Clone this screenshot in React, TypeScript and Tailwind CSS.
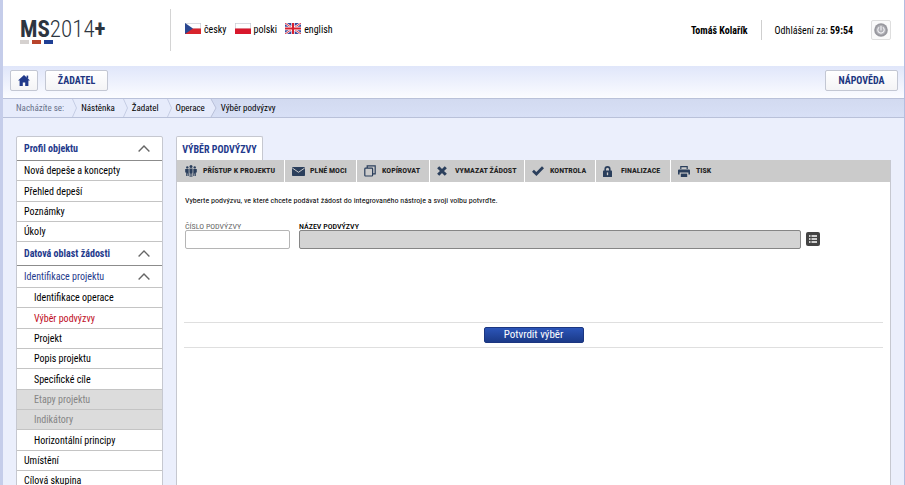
import React from 'react';
import clsx from 'clsx';

interface MenuItem {
    label: string;
    kind?: 'section' | 'group';
    child?: boolean;
    active?: boolean;
    disabled?: boolean;
}

const menu: MenuItem[] = [
    { label: 'Profil objektu', kind: 'section' },
    { label: 'Nová depeše a koncepty' },
    { label: 'Přehled depeší' },
    { label: 'Poznámky' },
    { label: 'Úkoly' },
    { label: 'Datová oblast žádosti', kind: 'section' },
    { label: 'Identifikace projektu', kind: 'group' },
    { label: 'Identifikace operace', child: true },
    { label: 'Výběr podvýzvy', child: true, active: true },
    { label: 'Projekt', child: true },
    { label: 'Popis projektu', child: true },
    { label: 'Specifické cíle', child: true },
    { label: 'Etapy projektu', child: true, disabled: true },
    { label: 'Indikátory', child: true, disabled: true },
    { label: 'Horizontální principy', child: true },
    { label: 'Umístění' },
    { label: 'Cílová skupina' },
];

const FlagCz = () => (
    <svg viewBox="0 0 16 11" className="h-[11px] w-4">
        <rect width="16" height="11" fill="#c9ccd4" />
        <rect x="0.7" y="0.7" width="14.6" height="4.8" fill="#fff" />
        <rect y="5.5" width="16" height="5.5" fill="#d8242c" />
        <path d="M0 0 8 5.5 0 11Z" fill="#2a4791" />
    </svg>
);

const FlagPl = () => (
    <svg viewBox="0 0 16 11" className="h-[11px] w-4">
        <rect width="16" height="11" fill="#c9ccd4" />
        <rect x="0.7" y="0.7" width="14.6" height="4.8" fill="#fff" />
        <rect y="5.5" width="16" height="5.5" fill="#d8182c" />
    </svg>
);

const FlagGb = () => (
    <svg viewBox="0 0 16 11" className="h-[11px] w-4">
        <rect width="16" height="11" fill="#3b4a9c" />
        <path d="M0 0 16 11M16 0 0 11" stroke="#fff" strokeWidth="2.2" />
        <path d="M0 0 16 11M16 0 0 11" stroke="#dc3545" strokeWidth="1" />
        <path d="M8 0V11M0 5.5H16" stroke="#fff" strokeWidth="3.4" />
        <path d="M8 0V11M0 5.5H16" stroke="#d8202f" strokeWidth="2" />
    </svg>
);

const Chevron = () => (
    <svg viewBox="0 0 12 7" className="h-[7px] w-3" fill="none" stroke="#666" strokeWidth="1.4">
        <path d="M0.6 6.4 6 1 11.4 6.4" />
    </svg>
);

const PeopleIcon = () => (
    <svg viewBox="0 0 12 12" className="size-3" fill="#2b3f5c">
        <circle cx="6" cy="1.5" r="1.5" />
        <circle cx="2.3" cy="2.4" r="1.2" />
        <circle cx="9.7" cy="2.4" r="1.2" />
        <path d="M4.4 3.5h3.2v4.2H7.3V12H6.4V8.5H5.6V12H4.7V7.7H4.4Z" />
        <path d="M0.2 4h3.5v4.2V11H2.8V8.5H2.3V11H1.2V7.5H.2Z" />
        <path d="M11.8 4H8.3v4.2V11h.9V8.5h.5V11h1.1V7.5h1Z" />
    </svg>
);

const MailIcon = () => (
    <svg viewBox="0 0 13 9" className="h-[9px] w-[13px]">
        <rect width="13" height="9" rx="0.8" fill="#2b3f5c" />
        <path d="M0.3 1 6.5 5.3 12.7 1" fill="none" stroke="#cbcbcb" strokeWidth="1" />
    </svg>
);

const CopyIcon = () => (
    <svg viewBox="0 0 12 12" className="size-3" fill="none" stroke="#2b3f5c" strokeWidth="1.2">
        <rect x="0.8" y="3.2" width="7.8" height="7.8" rx="0.8" />
        <path d="M3.2 3V0.8H11.2V8.8H8.8" />
    </svg>
);

const CrossIcon = () => (
    <svg viewBox="0 0 10 10" className="size-[10px]" stroke="#2b3f5c" strokeWidth="3">
        <path d="M1.2 1.2 8.8 8.8M8.8 1.2 1.2 8.8" />
    </svg>
);

const CheckIcon = () => (
    <svg viewBox="0 0 12 10" className="h-[10px] w-3" fill="none" stroke="#2b3f5c" strokeWidth="2.8">
        <path d="M1 4.8 4.4 8 11 1.2" />
    </svg>
);

const LockIcon = () => (
    <svg viewBox="0 0 9 11" className="h-[11px] w-[9px]">
        <path d="M2.2 5V3.2a2.3 2.3 0 0 1 4.6 0V5" fill="none" stroke="#2b3f5c" strokeWidth="1.6" />
        <rect y="4.6" width="9" height="6.4" rx="0.6" fill="#2b3f5c" />
        <path d="M4.5 6.4V9.2" stroke="#cbcbcb" strokeWidth="1.3" />
    </svg>
);

const PrintIcon = () => (
    <svg viewBox="0 0 12 11" className="h-[11px] w-3" fill="#2b3f5c">
        <path d="M2.2 0H9.8V3H8.6V1.2H3.4V3H2.2Z" />
        <path d="M1 3.6H11Q12 3.6 12 4.6V8.4H10.4V6.6H1.6V8.4H0V4.6Q0 3.6 1 3.6Z" />
        <path d="M2.8 7.6H9.2V11H2.8Z" />
    </svg>
);

const tools = [
    { label: 'PŘÍSTUP K PROJEKTU', icon: <PeopleIcon />, width: 'w-[107px]' },
    { label: 'PLNÉ MOCI', icon: <MailIcon />, width: 'w-[72px]' },
    { label: 'KOPÍROVAT', icon: <CopyIcon />, width: 'w-[73px]' },
    { label: 'VYMAZAT ŽÁDOST', icon: <CrossIcon />, width: 'w-[95px]' },
    { label: 'KONTROLA', icon: <CheckIcon />, width: 'w-[71px]' },
    { label: 'FINALIZACE', icon: <LockIcon />, width: 'w-[75px]' },
    { label: 'TISK', icon: <PrintIcon />, width: 'w-[60px]' },
];

const navButton =
    'flex h-[21px] items-center justify-center rounded-xs border border-[#c3c7d3] bg-linear-to-b from-white to-[#f4f4f6] text-[10px] font-bold text-[#20357f]';

const Header: React.FC = () => (
    <header className="flex h-[66px] shrink-0 items-start bg-white pr-[13px] pl-[17px]">
        <div className="w-[150px] pt-[19px]">
            <div className="text-[23px] leading-[21px] text-[#2d3540]">
                <span className="font-bold">MS</span>
                <span className="font-light">2014</span>
                <span className="font-bold">+</span>
            </div>
            <div className="flex gap-[3px]">
                <span className="h-1 w-[9px] bg-[#d5d1cf]" />
                <span className="h-1 w-[9px] bg-[#b8432b]" />
                <span className="h-1 w-[9px] bg-[#1f3f94]" />
            </div>
        </div>
        <div className="mt-[9px] h-[42px] w-px bg-[#d4d4d4]" />
        <nav className="ml-[14px] flex gap-2 pt-[22px] text-[10px] leading-4">
            <a href="#cs" className="flex items-start gap-[3px]"><span className="pt-px"><FlagCz /></span>česky</a>
            <a href="#pl" className="flex items-start gap-[3px]"><span className="pt-px"><FlagPl /></span>polski</a>
            <a href="#en" className="flex items-start gap-[3px]"><span className="pt-px"><FlagGb /></span>english</a>
        </nav>
        <div className="ml-auto flex items-center pt-5 text-[10px]">
            <span className="font-bold">Tomáš Kolařík</span>
            <span className="ml-[13px] h-5 w-px bg-[#cfcfcf]" />
            <span className="ml-[13px]">Odhlášení za: <b>59:54</b></span>
            <button aria-label="Odhlásit" className="ml-[18px] flex size-5 items-center justify-center rounded-xs border border-[#dedede] bg-[#fafafa]">
                <svg viewBox="0 0 14 14" className="size-[14px]" fill="none" strokeLinecap="round">
                    <circle cx="7" cy="7" r="6.8" fill="#98989e" />
                    <circle cx="7" cy="7" r="5" fill="#b0b0b6" />
                    <path d="M4.8 4.6a3.2 3.2 0 1 0 4.4 0M7 3.2V7" stroke="#f4f4f6" strokeWidth="1.1" />
                </svg>
            </button>
        </div>
    </header>
);

const crumbs = ['Nástěnka', 'Žadatel', 'Operace'];

const Breadcrumbs: React.FC = () => (
    <nav className="flex h-5 shrink-0 border-y border-[#b9c1d9] bg-linear-to-b from-[#d2daf0] to-[#d8e0f6] text-[9px] leading-[18px]">
        <span className="bg-[#e6ebfb] pl-[13px] text-[#68708a]">Nacházíte se:</span>
        {crumbs.map((crumb) => (
            <React.Fragment key={crumb}>
                <span className="w-2 bg-[#e6ebfb]" />
                <svg viewBox="0 0 5 18" className="h-[18px] w-[5px] bg-[#e6ebfb]" fill="none" stroke="#c5cde4">
                    <path d="M0.5 0 4.5 9 0.5 18" />
                </svg>
                <a href="#crumb" className="bg-[#e6ebfb] pl-1">{crumb}</a>
            </React.Fragment>
        ))}
        <svg viewBox="0 0 12 18" className="h-[18px] w-3">
            <path d="M0 0H6L11 9 6 18H0Z" fill="#e6ebfb" />
            <path d="M6 0 11 9 6 18" fill="none" stroke="#b9c1d9" />
        </svg>
        <span className="pl-1">Výběr podvýzvy</span>
    </nav>
);

const Sidebar: React.FC = () => (
    <ul className="w-[147px] shrink-0 rounded-t-xs border border-[#c6c8d0] bg-white text-[10px]">
        {menu.map((item) => (
            <li
                key={item.label}
                className={clsx(
                    'border-b',
                    item.kind === 'section' && 'h-6 border-[#8c8c8c] font-bold text-[#1f3a8c]',
                    item.kind === 'group' && 'h-[22px] border-[#c4c4c4] text-[#1f3a8c]',
                    !item.kind && 'h-5 border-[#c4c4c4] nth-[3n]:h-[21px]',
                    item.active && 'text-[#c00d1e]',
                    item.disabled && 'bg-[#dcdcdc] text-[#858585]'
                )}
            >
                <a href="#menu" className={clsx('flex h-full items-center justify-between pr-3', item.child ? 'pl-[17px]' : 'pl-[7px]')}>
                    {item.label}
                    {item.kind && <Chevron />}
                </a>
            </li>
        ))}
    </ul>
);

const Toolbar: React.FC = () => (
    <div className="flex h-[22px] bg-[#cbcbcb] pl-px text-[8px] font-bold text-[#222]">
        {tools.map((tool) => (
            <button
                key={tool.label}
                className={clsx('flex items-center border-r border-white pl-[7px] whitespace-nowrap last:border-r-0', tool.width)}
            >
                <span className="w-[18px]">{tool.icon}</span>
                {tool.label}
            </button>
        ))}
    </div>
);

const App: React.FC = () => {
    return (
        <div className="flex h-screen flex-col border-r border-l-3 border-r-[#b4bde0] border-l-[#c5cdea] bg-[#ebeffc] font-['Roboto_Condensed','Liberation_Sans_Narrow',Roboto,sans-serif] text-black">
            <Header />
            <div className="flex h-8 shrink-0 items-center justify-between bg-linear-to-b from-[#e0e6fa] to-[#fbfcff] pr-[6px] pb-[3px] pl-[7px]">
                <div className="flex gap-[7px]">
                    <button aria-label="Domů" className={clsx(navButton, 'w-7')}>
                        <svg viewBox="0 0 12 11" className="h-[11px] w-3" fill="#20398a">
                            <path d="M6 0 12 5.6H10.4V11H7.2V7.4H4.8V11H1.6V5.6H0Z" />
                            <path d="M8.6 0.6h1.6v3H8.6Z" />
                        </svg>
                    </button>
                    <button className={clsx(navButton, 'w-[63px]')}>ŽADATEL</button>
                </div>
                <button className={clsx(navButton, 'w-[73px]')}>NÁPOVĚDA</button>
            </div>
            <Breadcrumbs />
            <div className="flex min-h-0 flex-1 items-start gap-[13px] overflow-hidden pt-[18px] pr-[13px] pl-[13px]">
                <Sidebar />
                <main className="flex min-w-0 flex-1 flex-col self-stretch">
                    <div className="flex">
                        <button className="h-6 w-[87px] rounded-t-xs border border-b-0 border-[#c6c8d0] bg-white pt-0.5 text-[10px] font-bold text-[#1f3a8c]">
                            VÝBĚR PODVÝZVY
                        </button>
                    </div>
                    <div className="flex-1 border-x border-[#c6c8d0] bg-white">
                        <Toolbar />
                        <div className="px-[7px] pt-[13px]">
                            <p className="pl-px text-[8px] leading-3">
                                Vyberte podvýzvu, ve které chcete podávat žádost do integrovaného nástroje a svoji volbu potvrďte.
                            </p>
                            <div className="mt-4 flex items-end gap-[9px] pr-[63px] pl-px">
                                <div className="w-[105px]">
                                    <label htmlFor="cislo" className="block text-[8px] leading-[7px] text-[#666]">ČÍSLO PODVÝZVY</label>
                                    <input id="cislo" className="block h-[19px] w-full rounded-xs border border-[#b5b5b5] bg-white px-1 text-[10px]" />
                                </div>
                                <div className="min-w-0 flex-1">
                                    <label htmlFor="nazev" className="block text-[8px] leading-[7px] font-medium">NÁZEV PODVÝZVY</label>
                                    <input id="nazev" readOnly className="block h-[19px] w-full rounded-xs border border-[#868686] bg-[#d4d4d4] px-1 text-[10px]" />
                                </div>
                                <button aria-label="Vybrat ze seznamu" className="-ml-1 mb-[3px] flex size-[14px] items-center justify-center rounded-xs bg-[#444]">
                                    <svg viewBox="0 0 8 8" className="size-2" stroke="#fff" strokeWidth="1.4">
                                        <path d="M0 1H1.5M0 4H1.5M0 7H1.5M2.5 1H8M2.5 4H8M2.5 7H8" />
                                    </svg>
                                </button>
                            </div>
                            <div className="mt-[73px] flex h-[26px] items-center justify-center border-y border-[#dfdfdf]">
                                <button className="h-4 w-[100px] rounded-xs border border-[#1b3680] bg-linear-to-b from-[#2c55b8] to-[#1b3a88] text-[11px] leading-[14px] text-white">
                                    Potvrdit výběr
                                </button>
                            </div>
                        </div>
                    </div>
                </main>
            </div>
        </div>
    );
};

export default App;
